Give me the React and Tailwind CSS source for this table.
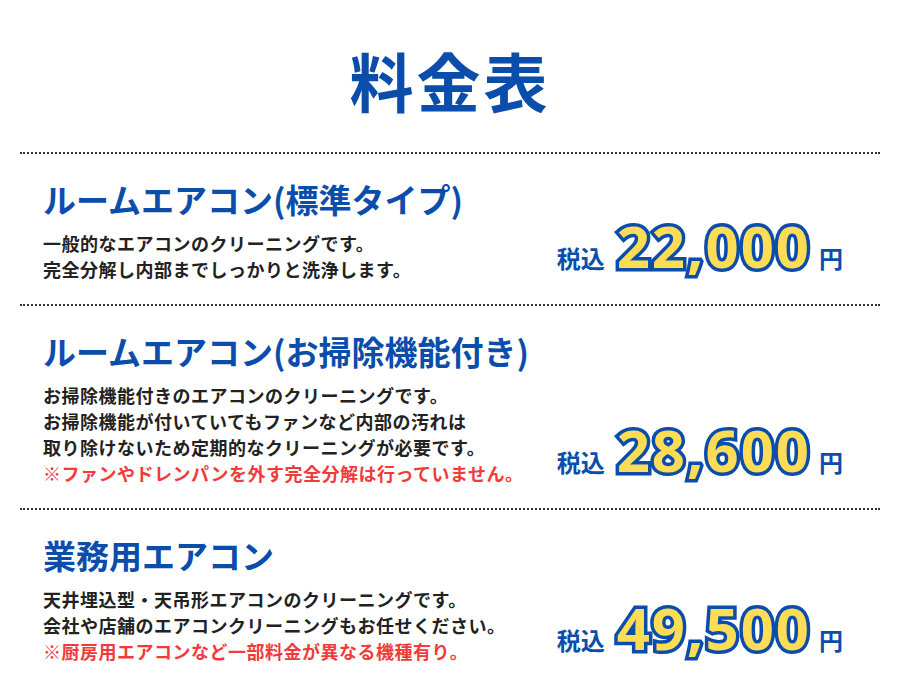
const plans = [
  {
    title: 'ルームエアコン(標準タイプ)',
    lines: ['一般的なエアコンのクリーニングです。', '完全分解し内部までしっかりと洗浄します。'],
    note: '',
    price: '22,000',
  },
  {
    title: 'ルームエアコン(お掃除機能付き)',
    lines: [
      'お掃除機能付きのエアコンのクリーニングです。',
      'お掃除機能が付いていてもファンなど内部の汚れは',
      '取り除けないため定期的なクリーニングが必要です。',
    ],
    note: '※ファンやドレンパンを外す完全分解は行っていません。',
    price: '28,600',
  },
  {
    title: '業務用エアコン',
    lines: ['天井埋込型・天吊形エアコンのクリーニングです。', '会社や店舗のエアコンクリーニングもお任せください。'],
    note: '※厨房用エアコンなど一部料金が異なる機種有り。',
    price: '49,500',
  },
];

export default function App() {
  return (
    <div className="w-[900px] h-[700px] bg-white overflow-hidden font-['Noto_Sans_CJK_JP','Noto_Sans',sans-serif]">
      <h1 className="pt-[35px] text-center text-[64px] leading-[88px] font-bold text-[#0a4dab] tracking-[3px]">料金表</h1>

      <div className="mx-5 mt-[29px]">
        {plans.map((plan) => (
          <div key={plan.price} className="border-t-2 border-dotted border-[#333] pl-[23px] pr-[37px] pt-[23px] pb-[22px] flex items-end justify-between">
            <div>
              <h2 className="text-[33px] leading-[44px] font-bold text-[#0a4dab]">{plan.title}</h2>
              <div className="mt-[9px] text-[18px] leading-[26px] font-bold tracking-[0.5px] text-[#222]">
                {plan.lines.map((line) => (
                  <p key={line}>{line}</p>
                ))}
                {plan.note && <p className="text-[#f23a3a]">{plan.note}</p>}
              </div>
            </div>

            <div className="flex items-baseline text-[#0a4dab] font-bold mb-[6px]">
              <span className="text-[24px] mr-[12px]">税込</span>
              <span className="font-['Open_Sans',sans-serif] text-[58px] leading-[58px] font-bold tracking-[2px] text-[#ffdc55] [-webkit-text-stroke:7px_#0a4dab] [paint-order:stroke_fill]">
                {plan.price}
              </span>
              <span className="text-[24px] ml-[8px]">円</span>
            </div>
          </div>
        ))}
      </div>
    </div>
  );
}
